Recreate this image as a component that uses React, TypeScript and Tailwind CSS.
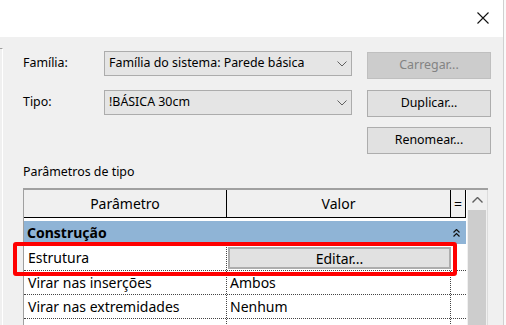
import * as React from "react";

// small windows-ish glyphs
function Chevron({ className = "" }: { className?: string }) {
  return (
    <svg width="10" height="6" viewBox="0 0 10 6" className={className}>
      <polyline points="0.5,0.5 5,5 9.5,0.5" fill="none" stroke="#606060" strokeWidth="1" />
    </svg>
  );
}

function Combo({ value }: { value: string }) {
  return (
    <div className="flex h-[25px] w-[248px] items-center justify-between border border-[#acacac] bg-[#e5e5e5] pl-[4px] pr-[4px]">
      <span className="truncate">{value}</span>
      <Chevron />
    </div>
  );
}

function Btn({ label, disabled, className = "" }: { label: string; disabled?: boolean; className?: string }) {
  return (
    <div
      className={
        "flex h-[27px] w-[124px] items-center justify-center border " +
        (disabled ? "border-[#bfbfbf] bg-[#cccccc] text-[#838383] " : "border-[#adadad] bg-[#e1e1e1] text-black ") +
        className
      }
    >
      {label}
    </div>
  );
}

const ROWS = [
  { name: "Virar nas inserções", value: "Ambos" },
  { name: "Virar nas extremidades", value: "Nenhum" },
  { name: "", value: "" },
];

export default function App() {
  return (
    <div className="relative flex h-[325px] w-[506px] overflow-hidden bg-[#f0f0f0] font-['Noto_Sans',sans-serif] text-[12.4px] text-black">
      <div className="flex w-[503px] flex-col">
        {/* title strip */}
        <div className="flex h-[37px] shrink-0 justify-end bg-white pr-[14px] pt-[12px]">
          <svg width="12" height="12" viewBox="0 0 12 12">
            <path d="M0.5 0.5 L11.5 11.5 M11.5 0.5 L0.5 11.5" stroke="#111" strokeWidth="1.1" fill="none" />
          </svg>
        </div>

        <div className="flex min-h-0 flex-1">
          <div className="mt-[11px] w-[3px] border-t border-r border-t-[#a0a0a0] border-r-white" />

          <div className="flex min-w-0 flex-1 flex-col pl-[20px] pt-[14px]">
            {/* Família */}
            <div className="flex items-start">
              <div className="flex h-[25px] w-[81px] items-center">Família:</div>
              <Combo value="Família do sistema: Parede básica" />
              <Btn label="Carregar..." disabled className="ml-[15px] mt-[1px]" />
            </div>

            {/* Tipo */}
            <div className="mt-[11px] flex items-start">
              <div className="flex h-[25px] w-[81px] items-center">Tipo:</div>
              <Combo value="!BÁSICA 30cm" />
              <Btn label="Duplicar..." className="ml-[15px]" />
            </div>

            <div className="mt-[10px] flex">
              <Btn label="Renomear..." className="ml-[344px]" />
            </div>

            <div className="mt-[9px] h-[17px] leading-[17px]">Parâmetros de tipo</div>

            {/* property grid */}
            <div className="mt-[8px] flex min-h-0 w-[465px] flex-1 border-l border-t-2 border-l-[#a0a0a0] border-t-[#a0a0a0] text-[14px]">
              <div className="flex w-[443px] flex-col bg-white pr-[1px]">
                <div className="flex h-[28px] shrink-0 border-b border-black bg-[#f0f0f0]">
                  <div className="flex w-[203px] items-center justify-center border-r border-black">Parâmetro</div>
                  <div className="flex w-[224px] items-center justify-center border-r border-black">Valor</div>
                  <div className="flex w-[15px] items-center justify-center border-r border-black">=</div>
                </div>

                <div className="mt-[3px] flex h-[23px] shrink-0 items-center justify-between bg-[#8fb4d6] pl-[3px] pr-[6px]">
                  <span className="font-bold">Construção</span>
                  <svg width="7" height="8" viewBox="0 0 7 8">
                    <polyline points="0.5,3.5 3.5,0.5 6.5,3.5" fill="none" stroke="#111" strokeWidth="1.2" />
                    <polyline points="0.5,7.5 3.5,4.5 6.5,7.5" fill="none" stroke="#111" strokeWidth="1.2" />
                  </svg>
                </div>

                <div className="flex h-[27px] shrink-0 border-b border-dotted border-b-[#444]">
                  <div className="flex w-[203px] items-center border-r border-dotted border-r-[#444] pl-[4px]">Estrutura</div>
                  <div className="flex w-[224px] pb-[1px] pl-[1px] pt-[3px]">
                    <div className="flex flex-1 items-center justify-center border-2 border-[#adadad] bg-[#e1e1e1]">Editar...</div>
                  </div>
                  <div className="w-[15px]" />
                </div>

                {ROWS.map((r, i) => (
                  <div key={i} className="flex h-[24px] shrink-0 border-b border-dotted border-b-[#444]">
                    <div className="flex w-[203px] items-center border-r border-dotted border-r-[#444] pl-[4px]">{r.name}</div>
                    <div className="flex w-[224px] items-center border-r border-dotted border-r-[#444] pl-[3px]">{r.value}</div>
                    <div className="w-[15px]" />
                  </div>
                ))}
              </div>

              {/* scrollbar */}
              <div className="flex w-[21px] flex-col border-r border-r-[#dcdcdc] bg-[#f0f0f0]">
                <div className="flex h-[20px] shrink-0 items-center justify-center">
                  <svg width="11" height="6" viewBox="0 0 11 6">
                    <polyline points="0.5,5.5 5.5,0.5 10.5,5.5" fill="none" stroke="#606060" strokeWidth="1.4" />
                  </svg>
                </div>
                <div className="mx-[1px] flex-1 bg-[#cdcdcd]" />
              </div>
            </div>
          </div>
        </div>
      </div>

      {/* right window edge */}
      <div className="w-[3px] border-l border-l-[#d0d0d0] bg-[#fafafa]" />

      {/* red annotation box */}
      <div className="absolute left-[13px] top-[242px] h-[34px] w-[444px] rounded-[3px] border-4 border-[#ff0000]" />
    </div>
  );
}
